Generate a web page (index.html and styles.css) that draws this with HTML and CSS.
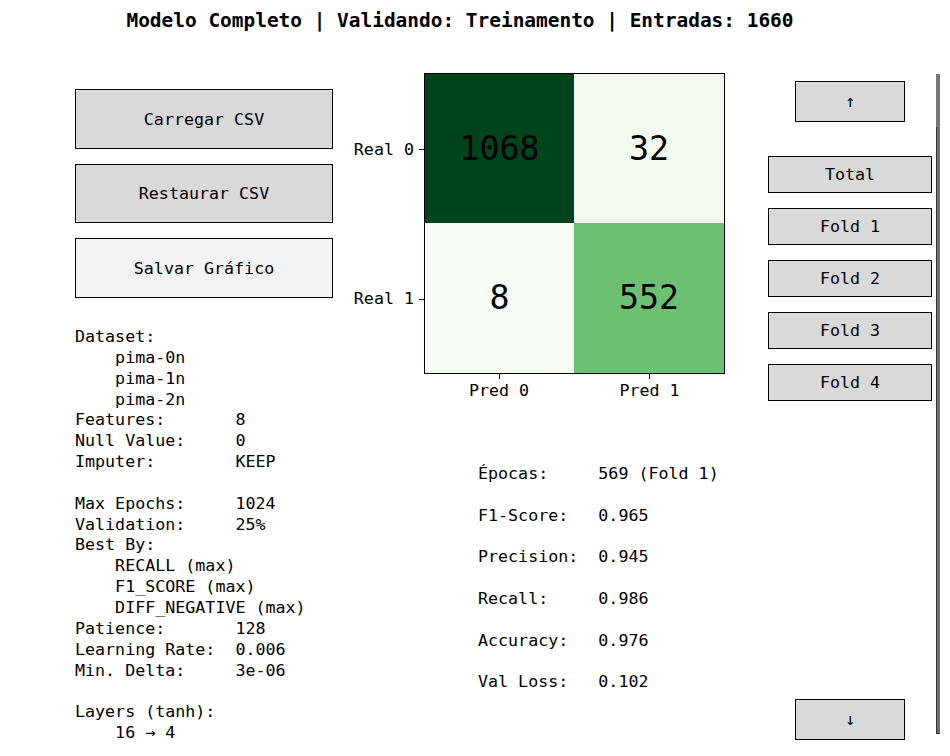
FILE: index.html
```html
<!DOCTYPE html>
<html lang="pt">
<head>
<meta charset="utf-8">
<title>Modelo Completo</title>
<link rel="stylesheet" href="styles.css">
</head>
<body>
<div class="fig">
  <div class="title">Modelo Completo | Validando: Treinamento | Entradas: 1660</div>
  <div class="main">
    <div class="left">
      <div class="btn">Carregar CSV</div>
      <div class="btn btn-mid">Restaurar CSV</div>
      <div class="btn btn-hover">Salvar Gráfico</div>
<pre class="info">Dataset:
    pima-0n
    pima-1n
    pima-2n
Features:       8
Null Value:     0
Imputer:        KEEP

Max Epochs:     1024
Validation:     25%
Best By:
    RECALL (max)
    F1_SCORE (max)
    DIFF_NEGATIVE (max)
Patience:       128
Learning Rate:  0.006
Min. Delta:     3e-06

Layers (tanh):
    16 → 4</pre>
    </div>
    <div class="middle">
      <div class="plot-row">
        <div class="ylabels">
          <div class="ylab r0"><span>Real 0</span><i class="ytick"></i></div>
          <div class="ylab r1"><span>Real 1</span><i class="ytick"></i></div>
        </div>
        <div class="plot">
          <div class="matrix">
            <div class="cell c-max">1068</div>
            <div class="cell c-low">32</div>
            <div class="cell c-min">8</div>
            <div class="cell c-mid">552</div>
          </div>
          <div class="xlabels">
            <div class="xlab"><i class="xtick"></i><span>Pred 0</span></div>
            <div class="xlab"><i class="xtick"></i><span>Pred 1</span></div>
          </div>
        </div>
      </div>
<pre class="metrics">Épocas:     569 (Fold 1)

F1-Score:   0.965

Precision:  0.945

Recall:     0.986

Accuracy:   0.976

Val Loss:   0.102</pre>
    </div>
    <div class="right">
      <div class="btn arrow up">↑</div>
      <div class="folds">
        <div class="btn fold">Total</div>
        <div class="btn fold">Fold 1</div>
        <div class="btn fold">Fold 2</div>
        <div class="btn fold">Fold 3</div>
        <div class="btn fold">Fold 4</div>
      </div>
      <div class="btn arrow down">↓</div>
    </div>
    <div class="scroll">
      <div class="thumb"></div>
    </div>
  </div>
</div>
</body>
</html>
```
FILE: styles.css
```css
html, body {
  margin: 0;
  padding: 0;
  background: #ffffff;
}

.fig {
  width: 950px;
  height: 756px;
  overflow: hidden;
  font-family: "DejaVu Sans Mono", "Liberation Mono", monospace;
  font-size: 16.67px;
  color: #000000;
}

.title {
  width: 920px;
  height: 40px;
  line-height: 42px;
  text-align: center;
  font-weight: bold;
  font-size: 19.44px;
  white-space: pre;
}

.main {
  display: flex;
  height: 716px;
}

.btn {
  box-sizing: border-box;
  border: 1px solid #000000;
  background: #d9d9d9;
  display: flex;
  align-items: center;
  justify-content: center;
  white-space: pre;
}

/* left column */
.left {
  margin-left: 75px;
  width: 258px;
  padding-top: 49px;
  display: flex;
  flex-direction: column;
}

.left .btn {
  height: 60px;
  margin-bottom: 15px;
}

.left .btn-mid {
  height: 59px;
}

.left .btn-hover {
  background: #f2f2f2;
  margin-bottom: 0;
}

pre {
  margin: 0;
  font-family: inherit;
  font-size: 16.67px;
  line-height: 20.85px;
}

.info {
  margin-top: 29px;
}

/* middle column */
.middle {
  width: 392px;
  display: flex;
  flex-direction: column;
}

.plot-row {
  display: flex;
  margin-top: 33px;
}

.ylabels {
  width: 91px;
  padding-top: 2px;
  display: flex;
  flex-direction: column;
}

.ylab {
  display: flex;
  align-items: center;
  justify-content: flex-end;
  line-height: 20px;
}

.ylab.r0 { height: 149px; }
.ylab.r1 { height: 150px; }

.ytick {
  display: block;
  width: 5px;
  height: 1px;
  margin-left: 5px;
  background: #000000;
}

.plot {
  width: 301px;
}

.matrix {
  box-sizing: border-box;
  width: 301px;
  height: 301px;
  border: 1px solid #000000;
  display: grid;
  grid-template-columns: 149px 150px;
  grid-template-rows: 149px 150px;
}

.cell {
  display: flex;
  align-items: center;
  justify-content: center;
  font-size: 33.33px;
  line-height: 1;
}

.c-max { background: #00441b; }
.c-low { background: #f2faef; }
.c-min { background: #f7fcf5; }
.c-mid { background: #6cc072; }

.xlabels {
  display: grid;
  grid-template-columns: 150px 151px;
}

.xlab {
  display: flex;
  flex-direction: column;
  align-items: center;
  line-height: 20px;
}

.xlab span {
  padding-top: 2px;
}

.xtick {
  display: block;
  width: 1px;
  height: 5px;
  background: #000000;
}

.metrics {
  margin-top: 63px;
  margin-left: 145px;
}

/* right column */
.right {
  margin-left: 43px;
  width: 164px;
  display: flex;
  flex-direction: column;
  align-items: center;
  padding-bottom: 16px;
}

.arrow {
  width: 110px;
  height: 41px;
}

.up {
  margin-top: 41px;
}

.down {
  margin-top: auto;
}

.folds {
  margin-top: 34px;
  width: 164px;
  display: flex;
  flex-direction: column;
  gap: 15px;
}

.fold {
  height: 37px;
}

/* scrollbar */
.scroll {
  margin-left: 4px;
  margin-top: 34px;
  width: 4px;
  height: 660px;
  background: #777777;
  display: flex;
  flex-direction: column;
}

.thumb {
  box-sizing: border-box;
  margin-top: 53px;
  flex: 1;
  border-left: 1px solid #333333;
  border-bottom: 1px solid #333333;
  background: #6e6e6e;
}
```
